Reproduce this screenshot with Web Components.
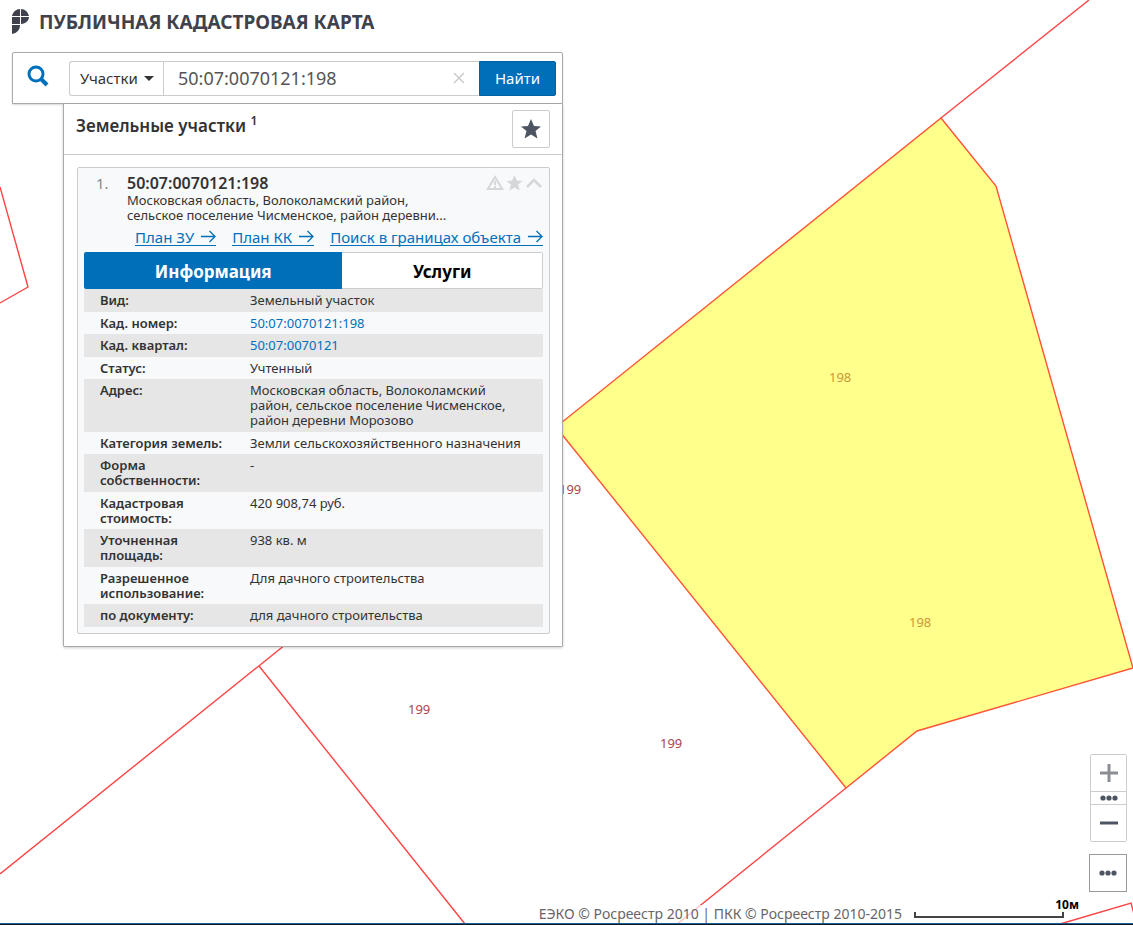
<!DOCTYPE html>
<html lang="ru">
<head>
<meta charset="utf-8">
<title>Публичная кадастровая карта</title>
<style>
    html, body {
        height: 100%;
        margin: 0;
    }

    body {
        font-family: "Noto Sans", "Open Sans", sans-serif;
        color: #333;
        background: #fff;
    }
</style>
</head>
<body>

<map-page>
    <parcel-map slot="map"></parcel-map>
    <page-title slot="title">ПУБЛИЧНАЯ КАДАСТРОВАЯ КАРТА</page-title>
    <search-bar slot="search" category="Участки" value="50:07:0070121:198"></search-bar>
    <result-panel slot="results" count="1">
        <span slot="heading">Земельные участки</span>
        <parcel-card number="1."></parcel-card>
    </result-panel>
    <zoom-controls slot="controls"></zoom-controls>
    <map-footer slot="footer" scale="10м">ЕЭКО © Росреестр 2010 | ПКК © Росреестр 2010-2015</map-footer>
</map-page>

<script>
class BaseComponent extends HTMLElement {
    constructor() {
        super();
        this.attachShadow({ mode: 'open' });
    }

    connectedCallback() {
        this.shadowRoot.innerHTML = this.render();
    }
}


class MapPage extends BaseComponent {
    render() {
        return `
            <style>
    :host {
        display: flex;
        flex-direction: column;
        position: relative;
        min-height: 100vh;
        overflow: hidden;
    }

    /* the map lies under everything else */
    ::slotted([slot="map"]) {
        position: absolute;
        inset: 0;
    }

    header, main, footer {
        position: relative;
    }

    header {
        padding: 8px 12px 0;
    }

    main {
        display: flex;
        flex: 1;
        justify-content: space-between;
        padding: 0 6px 0 12px;
    }

    .left {
        width: 551px;
        max-width: 100%;
    }

    .right {
        display: flex;
        align-items: flex-end;
    }
            </style>

            <slot name="map"></slot>
            <header><slot name="title"></slot></header>
            <main>
                <div class="left">
                    <slot name="search"></slot>
                    <slot name="results"></slot>
                </div>
                <div class="right"><slot name="controls"></slot></div>
            </main>
            <footer><slot name="footer"></slot></footer>
        `;
    }
}


class ParcelMap extends BaseComponent {
    render() {
        return `
            <style>
    :host {
        display: block;
    }

    svg {
        display: block;
        width: 100%;
        height: 100%;
    }

    .border {
        fill: none;
        stroke: #ff4444;
        stroke-width: 1.4;
    }

    .selected {
        fill: #ffff8b;
        stroke: #ff5533;
        stroke-width: 1.4;
    }

    text {
        font-family: "Noto Sans", sans-serif;
        font-size: 13px;
        fill: #a84848;
    }

    .inner {
        fill: #c99a35;
    }
            </style>

            <svg aria-label="Карта участков">
                <path class="border" d="M1089 0 941 118M0 187 28 287 0 303M0 874 556 427M259 666 465 924M846 788 676 925M1060 924 1131 903 1137 925"/>
                <path class="selected" d="M941 118 996 186 1133 668 917 731 846 788 556 427Z"/>
                <text class="inner" x="829" y="382">198</text>
                <text class="inner" x="909" y="627">198</text>
                <text x="559" y="494">199</text>
                <text x="408" y="714">199</text>
                <text x="660" y="748">199</text>
            </svg>
        `;
    }
}


class PageTitle extends BaseComponent {
    render() {
        return `
            <style>
    :host {
        display: block;
    }

    h1 {
        display: flex;
        align-items: center;
        gap: 10px;
        height: 28px;
        margin: 0 0 16px;
        font-size: 19px;
        line-height: 28px;
        color: #3f424c;
    }
            </style>

            <h1>
                <svg width="17" height="26" viewBox="0 1 17 26" fill="#3f424c" aria-hidden="true">
                    <path d="M8 1v7H0C1 4 4 1 8 1ZM9 1c4 0 7 3 8 7H9ZM0 9h8v7H0ZM9 9h8c0 4-4 7-8 7ZM0 17h8c0 5-3 8-8 9Z"/>
                </svg>
                <slot></slot>
            </h1>
        `;
    }
}


class SearchBar extends BaseComponent {
    render() {
        return `
            <style>
    :host {
        display: block;
    }

    form {
        display: flex;
        align-items: center;
        box-sizing: border-box;
        height: 52px;
        padding: 0 6px 0 0;
        background: #fff;
        border: 1px solid #aaa;
        border-radius: 2px 2px 0 0;
        box-shadow: 0 1px 2px rgba(0, 0, 0, 0.15);
    }

    .lens {
        flex: none;
        width: 56px;
        padding: 0 0 4px 14px;
        box-sizing: border-box;
    }

    .lens svg {
        display: block;
    }

    .field {
        display: flex;
        flex: 1;
        min-width: 0;
        height: 35px;
        box-sizing: border-box;
        border: 1px solid #ccc;
        border-right: 0;
        border-radius: 3px 0 0 3px;
    }

    .category {
        position: relative;
        display: flex;
        align-items: center;
        border-right: 1px solid #ccc;
    }

    select {
        appearance: none;
        width: 93px;
        height: 100%;
        padding: 0 0 0 10px;
        font: 15px "Noto Sans", sans-serif;
        color: #333;
        background: none;
        border: 0;
    }

    .caret {
        position: absolute;
        right: 9px;
        border: 5px solid transparent;
        border-top-color: #333;
        border-bottom: 0;
        pointer-events: none;
    }

    input {
        flex: 1;
        min-width: 0;
        padding: 0 14px;
        font: 18px "Noto Sans", sans-serif;
        color: #555;
        background: none;
        border: 0;
    }

    .clear {
        flex: none;
        width: 40px;
        padding: 0;
        background: none;
        border: 0;
    }

    .clear svg {
        display: block;
        margin: auto;
    }

    .find {
        flex: none;
        width: 77px;
        height: 35px;
        padding: 0;
        font: 15px "Noto Sans", sans-serif;
        color: #fff;
        background: #006fba;
        border: 1px solid #0062a5;
        border-radius: 0 2px 2px 0;
    }
            </style>

            <form onsubmit="return false">
                <span class="lens">
                    <svg width="22" height="22" viewBox="0 0 22 22" fill="none" stroke="#0070ba" aria-hidden="true">
                        <circle cx="9" cy="9" r="7" stroke-width="3"/>
                        <path d="m14 14 6 6" stroke-width="4"/>
                    </svg>
                </span>
                <div class="field">
                    <div class="category">
                        <select aria-label="Категория"><option>${this.getAttribute('category')}</option></select>
                        <span class="caret"></span>
                    </div>
                    <input type="text" aria-label="Поиск" value="${this.getAttribute('value')}">
                    <button class="clear" type="button" aria-label="Очистить">
                        <svg width="12" height="12" viewBox="0 0 12 12" stroke="#ccc" stroke-width="1.5"><path d="m1 1 10 10M11 1 1 11"/></svg>
                    </button>
                </div>
                <button class="find">Найти</button>
            </form>
        `;
    }
}


class ResultPanel extends BaseComponent {
    render() {
        return `
            <style>
    :host {
        display: block;
        margin-left: 51px;
        background: #fff;
        border: 1px solid #aaa;
        border-top: 0;
        border-radius: 0 0 2px 2px;
        box-shadow: 0 1px 3px rgba(0, 0, 0, 0.2);
    }

    .top {
        display: flex;
        align-items: center;
        justify-content: space-between;
        height: 50px;
        padding: 0 12px;
        border-bottom: 1px solid #ccc;
    }

    h2 {
        margin: 0 0 6px;
        font-size: 17px;
        font-weight: 600;
        line-height: 24px;
    }

    sup {
        font-size: 12px;
        line-height: 1px;
    }

    button {
        width: 38px;
        height: 38px;
        padding: 0;
        background: #fff;
        border: 1px solid #ccc;
        border-radius: 2px;
    }

    button svg {
        display: block;
        margin: auto;
    }

    .list {
        padding: 12px 12px 12px 13px;
    }
            </style>

            <div class="top">
                <h2><slot name="heading"></slot> <sup>${this.getAttribute('count')}</sup></h2>
                <button aria-label="Избранное">
                    <svg width="20" height="20" viewBox="0 0 20 20" fill="#4d5562"><path d="m10 0 3 7 7 .5-5.500 4.500 2 7.500L10 15.500 3.500 19.500l2-7.500L0 7.500 7 7Z"/></svg>
                </button>
            </div>
            <div class="list"><slot></slot></div>
        `;
    }
}


const ROWS = [
    ['Вид:', 'Земельный участок'],
    ['Кад. номер:', '<a href="#">50:07:0070121:198</a>'],
    ['Кад. квартал:', '<a href="#">50:07:0070121</a>'],
    ['Статус:', 'Учтенный'],
    ['Адрес:', 'Московская область, Волоколамский<br>район, сельское поселение Чисменское,<br>район деревни Морозово'],
    ['Категория земель:', 'Земли сельскохозяйственного назначения'],
    ['Форма<br>собственности:', '-'],
    ['Кадастровая<br>стоимость:', '420 908,74 руб.'],
    ['Уточненная<br>площадь:', '938 кв. м'],
    ['Разрешенное<br>использование:', 'Для дачного строительства'],
    ['по документу:', 'для дачного строительства']
];

const ARROW = `<svg width="15" height="13" viewBox="0 0 15 13" fill="none" stroke="currentColor" stroke-width="1.3" aria-hidden="true"><path d="M0 6.500h14M8.500 1l5.500 5.500L8.500 12"/></svg>`;

class ParcelCard extends BaseComponent {
    render() {
        return `
            <style>
    :host {
        display: block;
        padding: 6px;
        background: #f8f9fb;
        border: 1px solid #ccc;
        border-radius: 2px;
    }

    .summary {
        display: flex;
        height: 52px;
    }

    .number {
        width: 31px;
        padding-left: 12px;
        font-size: 15px;
        line-height: 19px;
        color: #888;
    }

    .about {
        flex: 1;
        font-size: 13px;
        line-height: 15px;
        white-space: nowrap;
    }

    h3 {
        margin: 0;
        font-size: 16px;
        font-weight: 600;
        line-height: 19px;
    }

    p {
        margin: 0;
    }

    .icons {
        display: flex;
        gap: 2px;
    }

    .icons button {
        height: 18px;
        padding: 0;
        background: none;
        border: 0;
    }

    .icons svg {
        display: block;
    }

    a {
        color: #0070ba;
        text-decoration: none;
    }

    .links {
        display: flex;
        justify-content: flex-end;
        gap: 16px;
        height: 26px;
        font-size: 15px;
        line-height: 20px;
    }

    .links a {
        display: flex;
        align-items: center;
        gap: 7px;
        height: 17px;
        margin-top: 2px;
        border-bottom: 1px solid;
    }

    .tabs {
        display: flex;
        height: 37px;
    }

    .tabs button {
        flex: 200;
        padding: 2px 0 0;
        font: bold 17px "Noto Sans", sans-serif;
        color: #000;
        background: #fff;
        border: 1px solid #ccc;
        border-left: 0;
        border-radius: 0 2px 2px 0;
    }

    .tabs .active {
        flex: 259;
        color: #fff;
        background: #006fba;
        border: 0;
        border-radius: 2px 0 0 2px;
    }

    table {
        width: 100%;
        table-layout: fixed;
        border-collapse: collapse;
        font-size: 13px;
        line-height: 15px;
    }

    th {
        width: 134px;
        padding: 4px 0 3px 16px;
        font-weight: 600;
        text-align: left;
        vertical-align: top;
    }

    td {
        padding: 4px 0 3px 16px;
        vertical-align: top;
        white-space: nowrap;
    }

    tr:nth-child(odd) {
        background: #e6e6e6;
    }

    tr:nth-child(odd) > * {
        padding-bottom: 4px;
    }
            </style>

            <div class="summary">
                <span class="number">${this.getAttribute('number')}</span>
                <div class="about">
                    <h3>50:07:0070121:198</h3>
                    <p>Московская область, Волоколамский район,</p>
                    <p>сельское поселение Чисменское, район деревни...</p>
                </div>
                <div class="icons">
                    <button aria-label="Сообщить об ошибке">
                        <svg width="18" height="16" viewBox="0 0 18 16" fill="none" stroke="#d5d7da" stroke-width="2"><path d="M9 2 1.800 14h14.400ZM9 6v4M9 11v2"/></svg>
                    </button>
                    <button aria-label="В избранное">
                        <svg width="17" height="16" viewBox="0 0 20 20" fill="#d5d7da"><path d="m10 0 3 7 7 .5-5.500 4.500 2 7.500L10 15.500 3.500 19.500l2-7.500L0 7.500 7 7Z"/></svg>
                    </button>
                    <button aria-label="Свернуть">
                        <svg width="18" height="16" viewBox="0 0 18 16" fill="none" stroke="#d5d7da" stroke-width="2.500"><path d="m2 12 7-7 7 7"/></svg>
                    </button>
                </div>
            </div>
            <div class="links">
                <a href="#">План ЗУ ${ARROW}</a>
                <a href="#">План КК ${ARROW}</a>
                <a href="#">Поиск в границах объекта ${ARROW}</a>
            </div>
            <div class="tabs">
                <button class="active">Информация</button>
                <button>Услуги</button>
            </div>
            <table>
                ${ROWS.map(([name, value]) => `<tr><th scope="row">${name}</th><td>${value}</td></tr>`).join('')}
            </table>
        `;
    }
}


class ZoomControls extends BaseComponent {
    render() {
        return `
            <style>
    :host {
        display: flex;
        flex-direction: column;
        gap: 12px;
        width: 38px;
    }

    .zoom {
        display: flex;
        flex-direction: column;
        margin-left: 1px;
        border: 1px solid #ccc;
        border-radius: 2px;
    }

    button {
        display: flex;
        align-items: center;
        justify-content: center;
        height: 36px;
        padding: 0;
        background: #fff;
        border: 0;
    }

    .levels {
        height: 14px;
        border: solid #ccc;
        border-width: 1px 0;
    }

    .more {
        height: 38px;
        border: 1px solid #999;
    }
            </style>

            <div class="zoom">
                <button aria-label="Приблизить">
                    <svg width="18" height="18" viewBox="0 0 18 18" stroke="#8b8d94" stroke-width="3"><path d="M9 0v18M0 9h18"/></svg>
                </button>
                <button class="levels" aria-label="Масштаб">
                    <svg width="18" height="6" viewBox="0 0 18 6" fill="#4d5562"><circle cx="3" cy="3" r="2.600"/><circle cx="9" cy="3" r="2.600"/><circle cx="15" cy="3" r="2.600"/></svg>
                </button>
                <button aria-label="Отдалить">
                    <svg width="18" height="18" viewBox="0 0 18 18" stroke="#4d5562" stroke-width="3"><path d="M0 9h18"/></svg>
                </button>
            </div>
            <button class="more" aria-label="Ещё">
                <svg width="18" height="6" viewBox="0 0 18 6" fill="#4d5562"><circle cx="3" cy="3" r="2.600"/><circle cx="9" cy="3" r="2.600"/><circle cx="15" cy="3" r="2.600"/></svg>
            </button>
        `;
    }
}


class MapFooter extends BaseComponent {
    render() {
        return `
            <style>
    :host {
        display: flex;
        align-items: flex-end;
        justify-content: flex-end;
        gap: 12px;
        height: 31px;
        padding: 0 54px 1px 0;
        border-bottom: 1px solid #0a1a2a;
        box-shadow: inset 0 -1px #1c5f96;
    }

    .copyright {
        font-size: 14px;
        line-height: 18px;
        color: #666;
        background: rgba(255, 255, 255, 0.7);
    }

    .scale {
        display: flex;
        flex-direction: column;
        align-items: flex-end;
        width: 165px;
        height: 26px;
        font-size: 12px;
        font-weight: bold;
        line-height: 15px;
        color: #000;
    }

    .ruler {
        box-sizing: border-box;
        width: 150px;
        height: 6px;
        margin-right: 15px;
        border: 2px solid #444;
        border-top: 0;
    }
            </style>

            <span class="copyright"><slot></slot></span>
            <div class="scale">
                ${this.getAttribute('scale')}
                <div class="ruler"></div>
            </div>
        `;
    }
}


customElements.define('map-page', MapPage);
customElements.define('parcel-map', ParcelMap);
customElements.define('page-title', PageTitle);
customElements.define('search-bar', SearchBar);
customElements.define('result-panel', ResultPanel);
customElements.define('parcel-card', ParcelCard);
customElements.define('zoom-controls', ZoomControls);
customElements.define('map-footer', MapFooter);
</script>
</body>
</html>
